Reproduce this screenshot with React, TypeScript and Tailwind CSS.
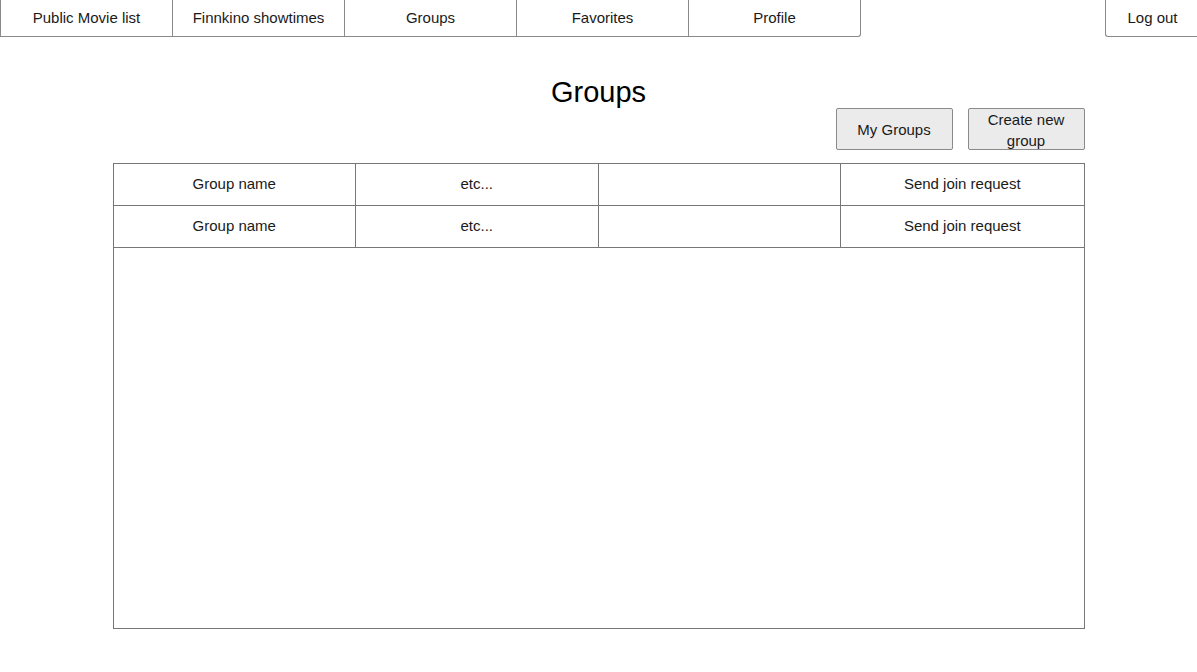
import React from 'react';

const tabs = ['Public Movie list', 'Finnkino showtimes', 'Groups', 'Favorites', 'Profile'];

const rows = [
  { name: 'Group name', extra: 'etc...', blank: '', action: 'Send join request' },
  { name: 'Group name', extra: 'etc...', blank: '', action: 'Send join request' },
];

export default function App() {
  return (
    <div className="min-h-[672px] bg-white text-[#1a1a1a] font-['Liberation_Sans',Arial,sans-serif]">
      <nav className="flex justify-between">
        <div className="flex">
          {tabs.map((t, i) => (
            <div
              key={t}
              className={
                'w-[173px] h-[37px] flex items-center justify-center text-[15px] border border-t-0 border-[#8a8a8a] ' +
                (i > 0 ? '-ml-px ' : '') +
                (i === tabs.length - 1 ? 'rounded-br-[3px]' : '')
              }
            >
              {t}
            </div>
          ))}
        </div>
        <div className="w-[92px] h-[37px] pl-[2px] flex items-center justify-center text-[15px] border border-t-0 border-r-0 border-[#8a8a8a] rounded-bl-[3px]">
          Log out
        </div>
      </nav>

      <main className="w-[972px] mx-auto">
        <h1 className="mt-[38px] text-center text-[29px] leading-[34px] text-black">Groups</h1>
        <div className="mt-[-1px] flex justify-end gap-[15px]">
          <button className="w-[117px] h-[42px] bg-[#ebebeb] border border-[#8a8a8a] rounded-[2px] text-[15px] leading-[21px]">
            My Groups
          </button>
          <button className="w-[117px] h-[42px] bg-[#ebebeb] border border-[#8a8a8a] rounded-[2px] text-[15px] leading-[21px] px-2">
            Create new group
          </button>
        </div>

        <div className="mt-[13px] h-[466px] border border-[#777]">
          {rows.map((r, i) => (
            <div key={i} className="grid grid-cols-4 h-[42px] border-b border-[#777]">
              <div className="flex items-center justify-center text-[15px] border-r border-[#777]">{r.name}</div>
              <div className="flex items-center justify-center text-[15px] border-r border-[#777]">{r.extra}</div>
              <div className="flex items-center justify-center text-[15px] border-r border-[#777]">{r.blank}</div>
              <div className="flex items-center justify-center text-[15px]">{r.action}</div>
            </div>
          ))}
        </div>
      </main>
    </div>
  );
}
